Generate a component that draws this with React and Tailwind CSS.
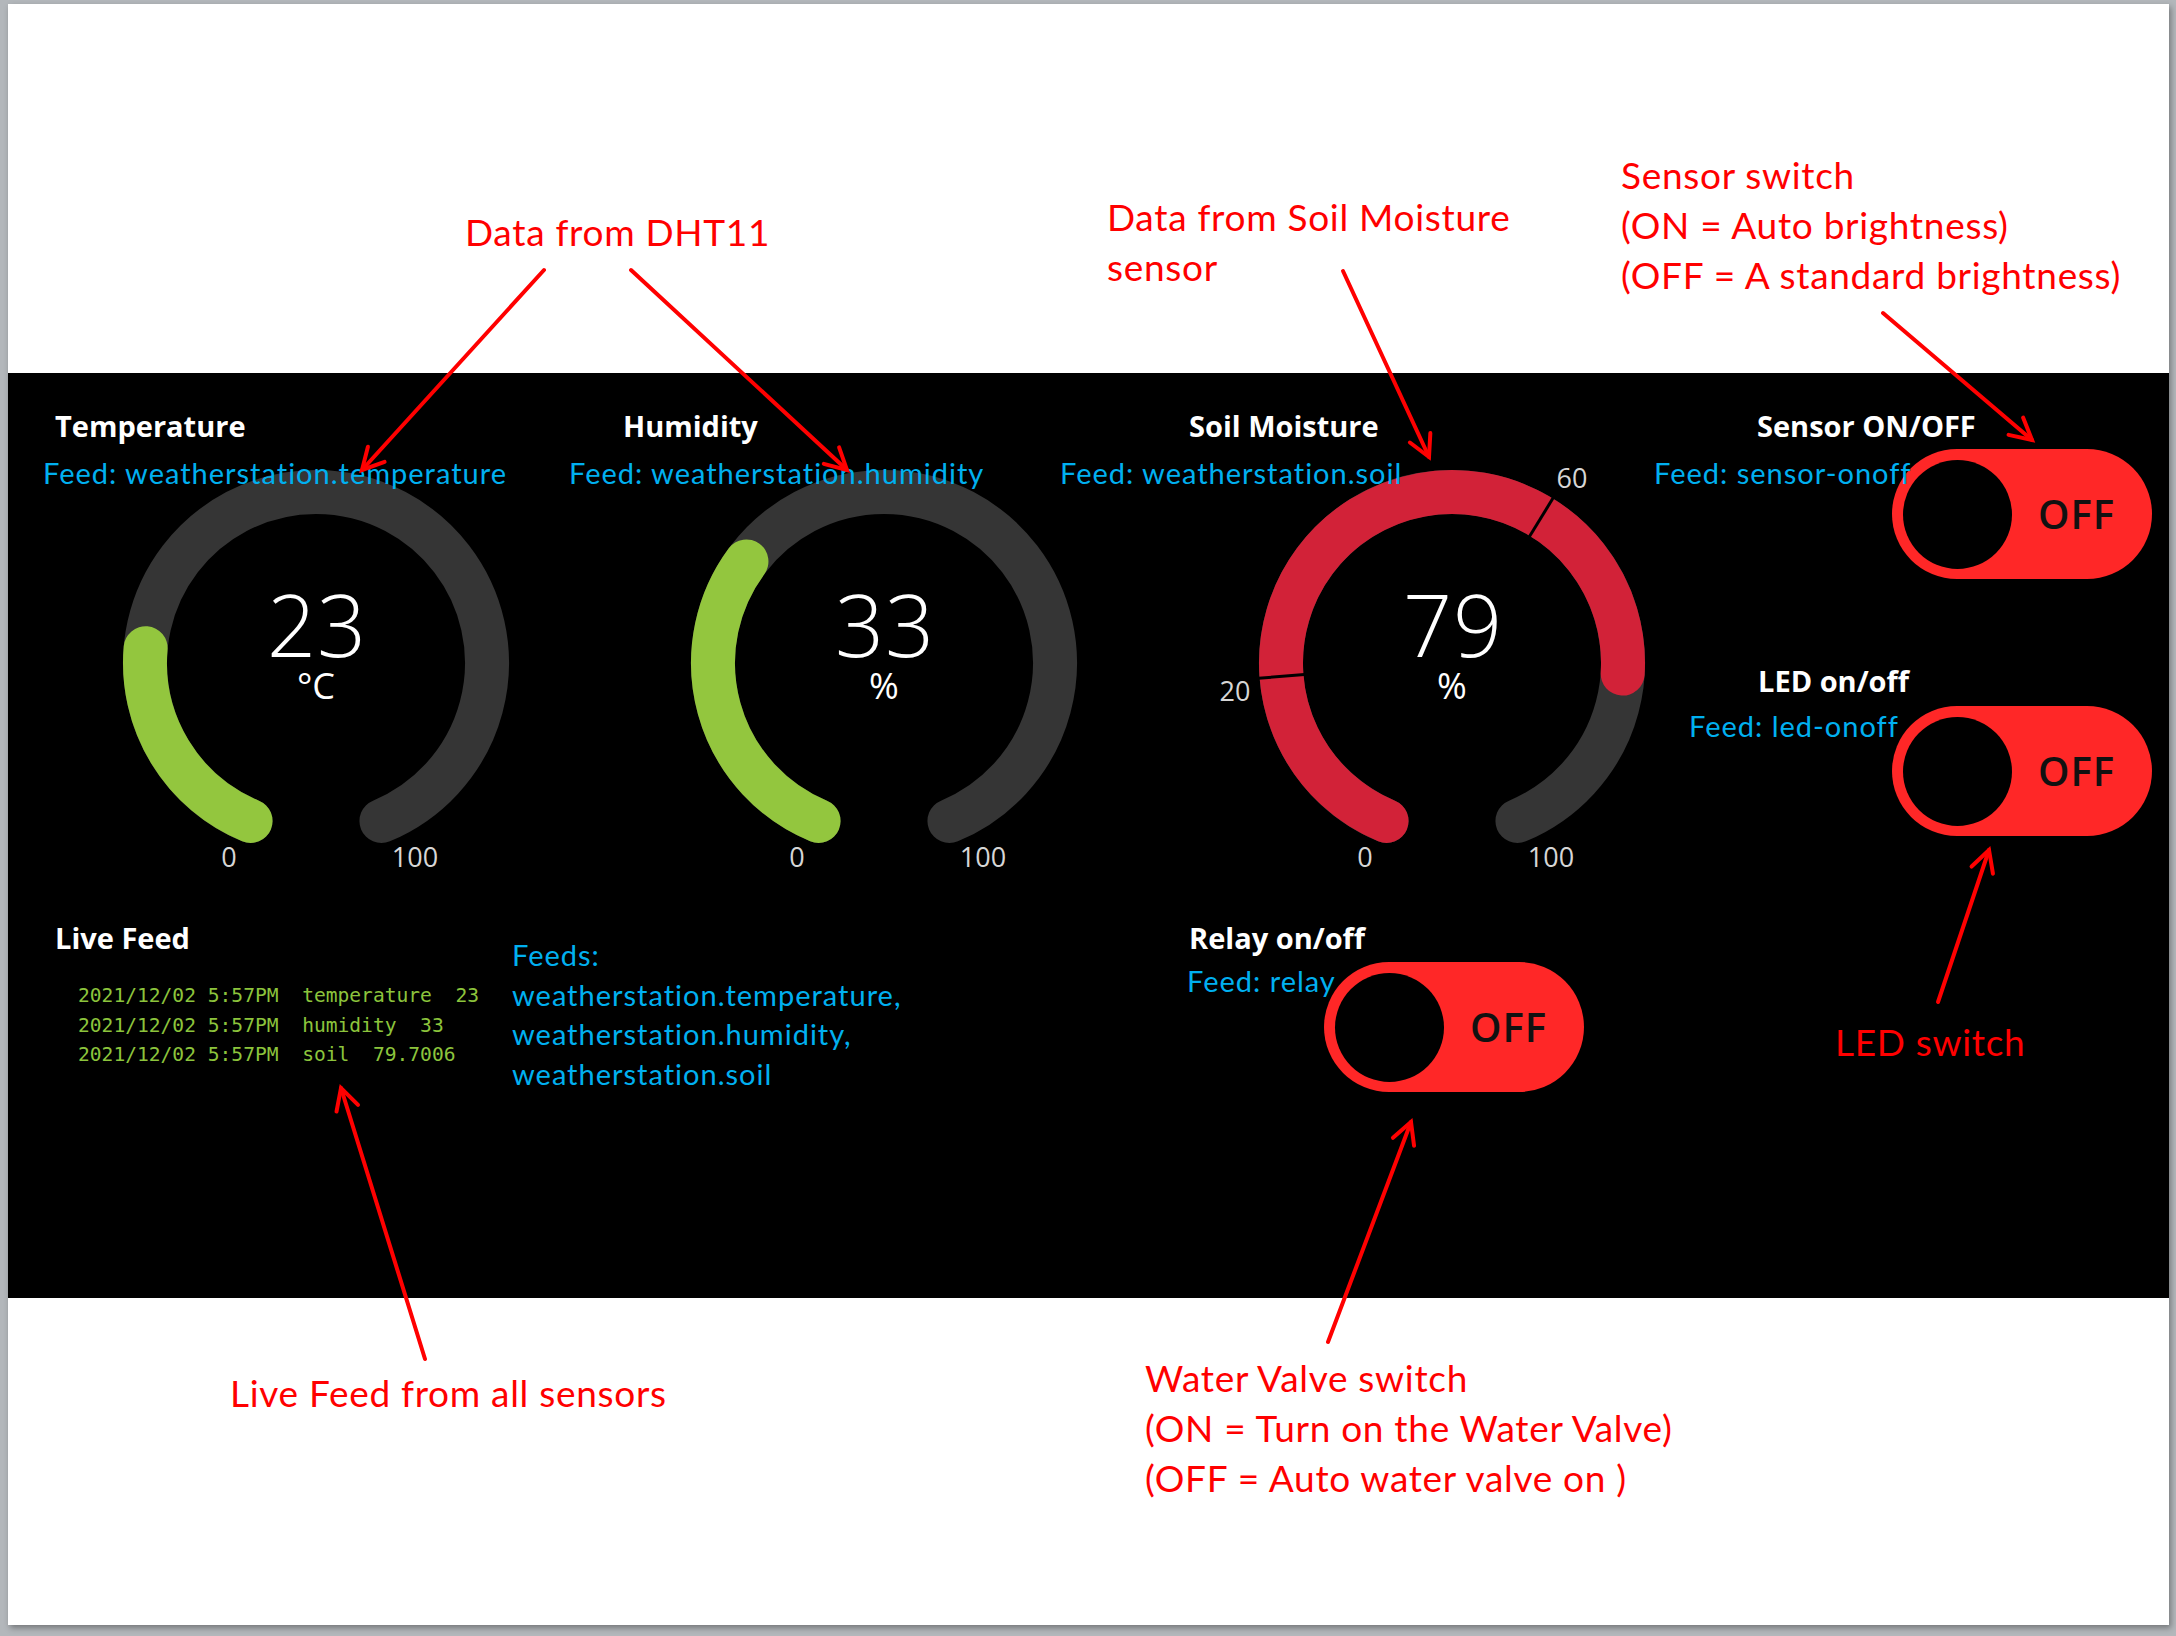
import React from "react";

const A0 = 202.5;
const SWEEP = 315;

function polar(cx, cy, r, deg) {
  const a = (deg * Math.PI) / 180;
  return [cx + r * Math.sin(a), cy - r * Math.cos(a)];
}

function arc(cx, cy, r, a0, a1) {
  const [x0, y0] = polar(cx, cy, r, a0);
  const [x1, y1] = polar(cx, cy, r, a1);
  const large = a1 - a0 > 180 ? 1 : 0;
  return `M ${x0} ${y0} A ${r} ${r} 0 ${large} 1 ${x1} ${y1}`;
}

function Gauge({ value, display, unit, color, ticks = [], extraLabels = [] }) {
  const cx = 240;
  const cy = 200;
  const r = 171;
  const sw = 44;
  const av = A0 + (SWEEP * Math.min(value, 100)) / 100;
  const labelStyle = {
    fontFamily: "'Open Sans', sans-serif",
    fontSize: 27,
    fontWeight: 500,
    fill: "#d6d6d6",
  };
  return (
    <svg width="480" height="420" viewBox="0 0 480 420" className="block overflow-visible">
      <path d={arc(cx, cy, r, A0, A0 + SWEEP)} stroke="#353535" strokeWidth={sw} fill="none" strokeLinecap="round" />
      <path d={arc(cx, cy, r, A0, av)} stroke={color} strokeWidth={sw} fill="none" strokeLinecap="round" />
      {ticks.map((t) => {
        const a = A0 + (SWEEP * t) / 100;
        const [x0, y0] = polar(cx, cy, r - sw / 2 - 1, a);
        const [x1, y1] = polar(cx, cy, r + sw / 2 + 1, a);
        return <line key={t} x1={x0} y1={y0} x2={x1} y2={y1} stroke="#000" strokeWidth="3" />;
      })}
      <text
        x={cx + 1}
        y={160}
        textAnchor="middle"
        dominantBaseline="central"
        style={{ fontFamily: "'Open Sans', sans-serif", fontSize: 86, fontWeight: 300, fill: "#fff", letterSpacing: 1 }}
      >
        {display}
      </text>
      <text
        x={cx}
        y={222}
        textAnchor="middle"
        dominantBaseline="central"
        style={{ fontFamily: "'Open Sans', sans-serif", fontSize: 36, fontWeight: 400, fill: "#fff" }}
      >
        {unit}
      </text>
      <text x={153} y={393} textAnchor="middle" dominantBaseline="central" style={labelStyle}>
        0
      </text>
      <text x={339} y={393} textAnchor="middle" dominantBaseline="central" style={labelStyle}>
        100
      </text>
      {extraLabels.map((l) => (
        <text key={l.t} x={l.x} y={l.y} textAnchor="middle" dominantBaseline="central" style={labelStyle}>
          {l.t}
        </text>
      ))}
    </svg>
  );
}

function Title({ children, className = "" }) {
  return (
    <div className={`font-['Open_Sans',sans-serif] text-[29px] font-bold leading-[36px] text-white ${className}`}>
      {children}
    </div>
  );
}

function GaugeBlock({ title, titlePad, ...props }) {
  return (
    <div className="flex flex-col pt-[35px]">
      <Title className={titlePad}>{title}</Title>
      <div className="ml-[36px] mt-[19px]">
        <Gauge {...props} />
      </div>
    </div>
  );
}

function Toggle() {
  return (
    <div className="flex h-[130px] w-[260px] items-center rounded-full bg-[#ff2727] pl-[11px]">
      <div className="h-[109px] w-[109px] rounded-full bg-black" />
      <span className="ml-[26px] font-['Open_Sans',sans-serif] text-[40px] font-semibold leading-none tracking-[1px] text-[#111]">
        OFF
      </span>
    </div>
  );
}

function Arrow({ x0, y0, x1, y1 }) {
  const L = Math.hypot(x0 - x1, y0 - y1);
  const ux = (x0 - x1) / L;
  const uy = (y0 - y1) / L;
  const len = 24;
  const ang = (28 * Math.PI) / 180;
  const rot = (s) => [
    x1 + len * (ux * Math.cos(s * ang) - uy * Math.sin(s * ang)),
    y1 + len * (ux * Math.sin(s * ang) + uy * Math.cos(s * ang)),
  ];
  const [ax, ay] = rot(1);
  const [bx, by] = rot(-1);
  return (
    <g stroke="#ff0000" strokeWidth="4" fill="none" strokeLinecap="round" strokeLinejoin="miter">
      <line x1={x0} y1={y0} x2={x1} y2={y1} />
      <polyline points={`${ax},${ay} ${x1},${y1} ${bx},${by}`} />
    </g>
  );
}

const redText =
  "absolute font-['Lato',sans-serif] text-[37px] tracking-[0.7px] leading-[50px] text-[#ff0000] whitespace-pre";
const blueText =
  "absolute font-['Lato',sans-serif] text-[29px] tracking-[1px] leading-[32px] text-[#00b0f0] whitespace-pre";

export default function App() {
  return (
    <div className="relative h-[1636px] w-[2176px] overflow-hidden bg-[#b3b7bb] pl-[8px] pt-[4px]">
      <div className="flex h-[1621px] w-[2161px] flex-col bg-white shadow-[2px_3px_6px_rgba(0,0,0,0.35)]">
        <div className="h-[369px] shrink-0" />
        <div className="flex h-[925px] shrink-0 flex-col bg-black pl-[32px]">
          <div className="grid h-[547px] grid-cols-[568px_568px_568px_1fr]">
            <GaugeBlock title="Temperature" titlePad="pl-[15px]" value={23} display="23" unit="°C" color="#93c63e" />
            <GaugeBlock title="Humidity" titlePad="pl-[15px]" value={33} display="33" unit="%" color="#93c63e" />
            <GaugeBlock
              title="Soil Moisture"
              titlePad="pl-[13px]"
              value={79.7006}
              display="79"
              unit="%"
              color="#d22238"
              ticks={[20, 60]}
              extraLabels={[
                { t: "20", x: 23, y: 227 },
                { t: "60", x: 360, y: 14 },
              ]}
            />
            <div className="flex flex-col pt-[35px]">
              <Title className="pl-[13px]">Sensor ON/OFF</Title>
              <div className="ml-[148px] mt-[5px]">
                <Toggle />
              </div>
              <Title className="mt-[84px] pl-[14px]">LED on/off</Title>
              <div className="ml-[148px] mt-[7px]">
                <Toggle />
              </div>
            </div>
          </div>
          <div className="grid grid-cols-[472px_664px_1fr]">
            <div className="flex flex-col">
              <Title className="pl-[15px]">Live Feed</Title>
              <div className="mt-[25px] whitespace-pre pl-[38px] font-['DejaVu_Sans_Mono',monospace] text-[19.6px] leading-[29.5px] text-[#8cc43c]">
                <div>2021/12/02 5:57PM  temperature  23</div>
                <div>2021/12/02 5:57PM  humidity  33</div>
                <div>2021/12/02 5:57PM  soil  79.7006</div>
              </div>
            </div>
            <div className="pt-[15px] font-['Lato',sans-serif] text-[29px] leading-[39.5px] tracking-[1px] text-[#00b0f0]">
              <div>Feeds:</div>
              <div>weatherstation.temperature,</div>
              <div>weatherstation.humidity,</div>
              <div>weatherstation.soil</div>
            </div>
            <div className="flex flex-col">
              <Title className="pl-[13px]">Relay on/off</Title>
              <div className="ml-[148px] mt-[6px]">
                <Toggle />
              </div>
            </div>
          </div>
        </div>
        <div className="flex-1" />
      </div>

      {/* blue feed overlays */}
      <div className={`${blueText} left-[43px] top-[457px]`}>Feed: weatherstation.temperature</div>
      <div className={`${blueText} left-[569px] top-[457px]`}>Feed: weatherstation.humidity</div>
      <div className={`${blueText} left-[1060px] top-[457px]`}>Feed: weatherstation.soil</div>
      <div className={`${blueText} left-[1654px] top-[457px]`}>Feed: sensor-onoff</div>
      <div className={`${blueText} left-[1689px] top-[710px]`}>Feed: led-onoff</div>
      <div className={`${blueText} left-[1187px] top-[965px]`}>Feed: relay</div>

      {/* arrows */}
      <svg className="pointer-events-none absolute left-0 top-0" width="2176" height="1636" viewBox="0 0 2176 1636">
        <Arrow x0={544} y0={270} x1={362} y1={470} />
        <Arrow x0={631} y0={270} x1={847} y1={470} />
        <Arrow x0={1343} y0={271} x1={1429} y1={457} />
        <Arrow x0={1883} y0={313} x1={2032} y1={440} />
        <Arrow x0={1938} y0={1002} x1={1989} y1={850} />
        <Arrow x0={425} y0={1359} x1={341} y1={1088} />
        <Arrow x0={1328} y0={1342} x1={1411} y1={1122} />
      </svg>

      {/* red annotations */}
      <div className={`${redText} left-[465px] top-[207px]`}>Data from DHT11</div>
      <div className={`${redText} left-[1107px] top-[192px]`}>
        <div>Data from Soil Moisture</div>
        <div>sensor</div>
      </div>
      <div className={`${redText} left-[1621px] top-[150px]`}>
        <div>Sensor switch</div>
        <div>(ON = Auto brightness)</div>
        <div>(OFF = A standard brightness)</div>
      </div>
      <div className={`${redText} left-[1835px] top-[1017px]`}>LED switch</div>
      <div className={`${redText} left-[230px] top-[1368px]`}>Live Feed from all sensors</div>
      <div className={`${redText} left-[1145px] top-[1353px]`}>
        <div>Water Valve switch</div>
        <div>(ON = Turn on the Water Valve)</div>
        <div>(OFF = Auto water valve on )</div>
      </div>
    </div>
  );
}
